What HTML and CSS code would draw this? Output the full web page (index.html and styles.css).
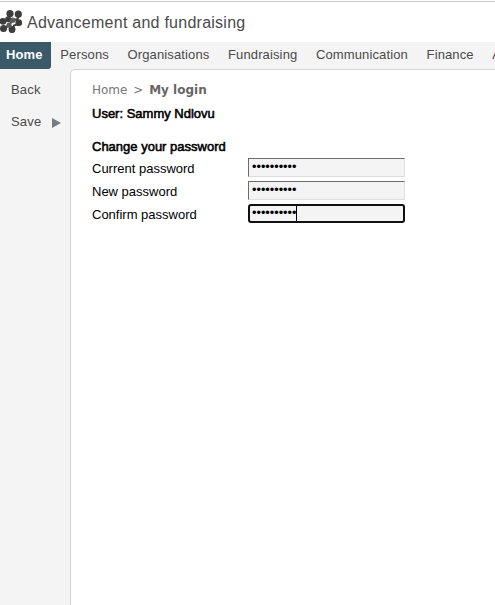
FILE: index.html
```html
<!DOCTYPE html>
<html lang="en">
<head>
<meta charset="utf-8">
<title>Advancement and fundraising</title>
<link rel="stylesheet" href="styles.css">
</head>
<body>
<header class="brand">
  <svg class="logo" width="22" height="23" viewBox="0 0 22 23" aria-hidden="true">
    <g stroke="#3d3d3d" fill="#3d3d3d" stroke-width="2">
      <path d="M3 11.5 8 9.7 10 4M2.8 18.5 8.5 16 12.5 10.5 17.5 9 19.5 4M12 20 14 15.5 19 13.5" fill="none"/>
      <circle cx="10" cy="3.7" r="2.6"/><circle cx="18.3" cy="4.2" r="2.6"/>
      <circle cx="3" cy="11.3" r="2.4"/><circle cx="8.2" cy="9.3" r="2"/>
      <circle cx="18.8" cy="12.7" r="2.4"/><circle cx="3.5" cy="18.6" r="2.5"/>
      <circle cx="12" cy="19.6" r="2.5"/>
    </g>
    <g fill="#5b5b5b"><circle cx="12.8" cy="10.2" r="2.6"/><circle cx="9" cy="15.2" r="2.6"/></g>
  </svg>
  <span class="brand-name">Advancement and fundraising</span>
</header>
<nav class="menu">
  <a class="menu-item active">Home</a>
  <a class="menu-item">Persons</a>
  <a class="menu-item">Organisations</a>
  <a class="menu-item">Fundraising</a>
  <a class="menu-item">Communication</a>
  <a class="menu-item">Finance</a>
  <a class="menu-item">Administration</a>
</nav>
<div class="layout">
  <aside class="side">
    <a class="side-item">Back</a>
    <a class="side-item">Save<svg width="9" height="10" viewBox="0 0 9 10"><path d="M0 0 9 5 0 10z" fill="#777c80"/></svg></a>
  </aside>
  <main class="content">
    <div class="crumbs">Home <span class="sep">&gt;</span> <b>My login</b></div>
    <div class="heading user">User: Sammy Ndlovu</div>
    <div class="heading">Change your password</div>
    <form class="form">
      <label>Current password</label><div class="field"><span class="dots">••••••••••</span></div>
      <label>New password</label><div class="field"><span class="dots">••••••••••</span></div>
      <label>Confirm password</label><div class="field focused"><span class="dots">••••••••••</span><i class="caret"></i></div>
    </form>
  </main>
</div>
</body>
</html>
```
FILE: styles.css
```css
* { box-sizing: border-box; }
body {
  margin: 0;
  height: 605px;
  overflow: hidden;
  display: flex;
  flex-direction: column;
  background: #f4f4f4;
  font: 13px/15px "Liberation Sans", Arial, sans-serif;
  color: #000;
}
.brand {
  flex: none;
  height: 42px;
  border-top: 1px solid #fff;
  box-shadow: inset 0 1px #c8c8c8;
  background: #fff;
  display: flex;
  align-items: center;
  padding-top: 1px;
}
.logo { flex: none; margin-bottom: 1px; }
.brand-name {
  margin: 2px 0 0 5px;
  font-size: 16px;
  line-height: 20px;
  letter-spacing: 0.25px;
  color: #4a4a4a;
  white-space: nowrap;
}
.menu {
  flex: none;
  height: 27px;
  display: flex;
  white-space: nowrap;
  letter-spacing: 0.13px;
  color: #4a4a4a;
}
.menu-item { flex: none; padding: 5px 9.3px 0; }
.menu-item.active {
  width: 51px;
  padding-left: 6px;
  padding-right: 0;
  background: #3a5a6a;
  border-radius: 0 0 3px 0;
  color: #fff;
  font-weight: bold;
}
.layout { flex: 1; display: flex; }
.side {
  width: 70px;
  padding: 13px 0 0 11px;
  letter-spacing: 0.2px;
  color: #4a4a4a;
}
.side-item { display: flex; align-items: center; height: 15px; margin-bottom: 17px; }
.side-item svg { margin: 2px 0 0 11px; }
.content {
  flex: 1;
  padding: 13px 0 0 21px;
  background: #fff;
  border: solid #d2d4d6;
  border-width: 1px 0 0 1px;
  border-top-left-radius: 5px;
}
.crumbs {
  height: 23px;
  font-family: "DejaVu Sans", Verdana, sans-serif;
  font-size: 12px;
  line-height: 14px;
  color: #777;
}
.sep { margin: 0 2px; }
.crumbs b { color: #666; }
.heading { line-height: 15px; -webkit-text-stroke: 0.55px #000; }
.user { margin-bottom: 18px; }
.form {
  display: grid;
  grid-template-columns: 156px 157px;
  grid-auto-rows: 19px;
  row-gap: 4px;
  margin-top: 4px;
}
.form label { padding-top: 3px; }
.field {
  display: flex;
  align-items: center;
  padding-left: 3px;
  background: #f4f4f4;
  border: 1px solid;
  border-color: #6b6b6b #dedede #dedede #6b6b6b;
}
.focused { border: 2px solid #101010; border-radius: 3px; padding-left: 2px; }
.dots { font-size: 12.7px; letter-spacing: 0; line-height: 15px; }
.caret { width: 1px; height: 15px; background: #000; }
```
